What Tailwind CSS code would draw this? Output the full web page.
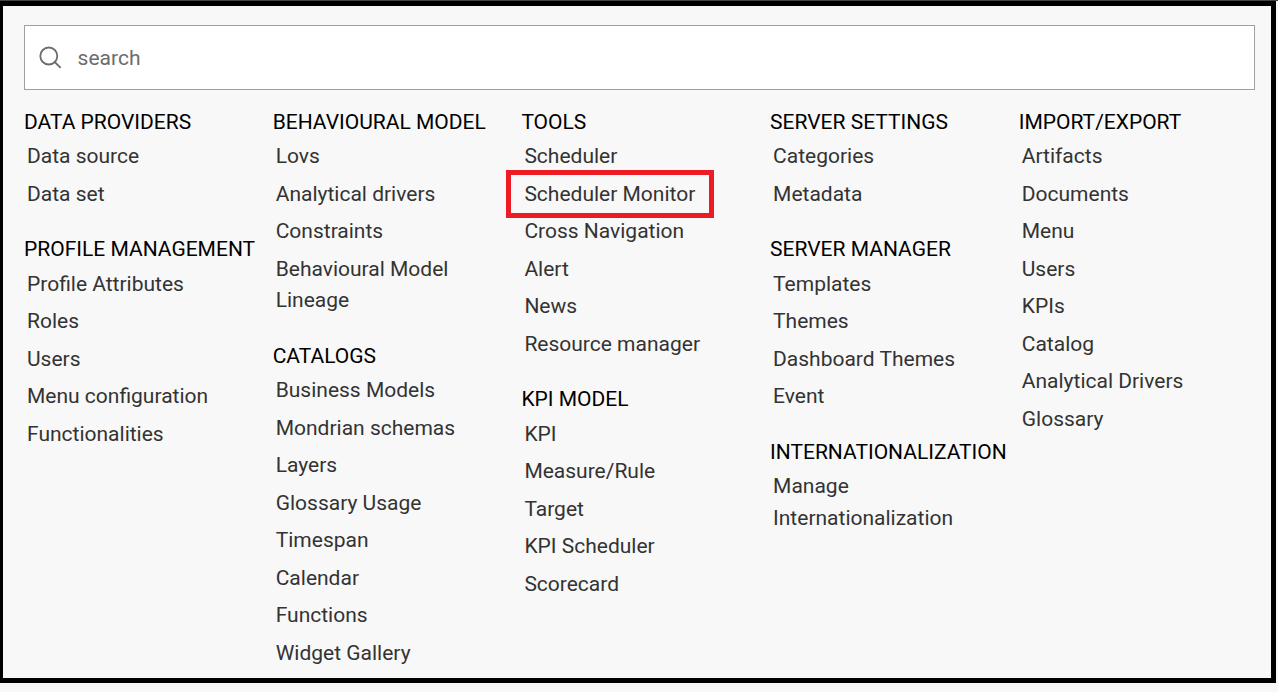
<!DOCTYPE html>
<html lang="en"><head><meta charset="utf-8"><title>Menu</title>
<script src="https://cdn.jsdelivr.net/npm/@tailwindcss/browser@4"></script></head>
<body class="bg-[#f8f8f8]">
<div class="w-[1278px] h-[692px] border-t border-[#444] pb-[9px] pr-[2px] overflow-hidden">
<main class="h-full border-y-[5px] border-l-[3px] border-r-[5px] border-black bg-[#f8f8f8] pt-[19px] pl-[21px] font-[Roboto,sans-serif] text-[21px] text-[#333]">
<label class="flex items-center w-[1231px] h-[65px] border border-[#a0a0a0] bg-white pl-[14px] gap-[15.6px] text-[#6c6c6c]">
<svg class="size-[23px]" viewBox="0 0 23 23" fill="none" stroke="#6c6c6c" stroke-width="1.8"><circle cx="9.8" cy="10" r="8.5"/><path d="M15.7 16l6 5.9"/></svg>
<span class="pt-[2px]">search</span></label>
<div id="cols" class="grid grid-cols-[repeat(5,248.7px)] mt-[14.5px]"></div>
</main></div>
<script>
const cols=[[['DATA PROVIDERS','Data source','Data set'],['PROFILE MANAGEMENT','Profile Attributes','Roles','Users','Menu configuration','Functionalities']],
[['BEHAVIOURAL MODEL','Lovs','Analytical drivers','Constraints','Behavioural Model Lineage'],['CATALOGS','Business Models','Mondrian schemas','Layers','Glossary Usage','Timespan','Calendar','Functions','Widget Gallery']],
[['TOOLS','Scheduler','Scheduler Monitor','Cross Navigation','Alert','News','Resource manager'],['KPI MODEL','KPI','Measure/Rule','Target','KPI Scheduler','Scorecard']],
[['SERVER SETTINGS','Categories','Metadata'],['SERVER MANAGER','Templates','Themes','Dashboard Themes','Event'],['INTERNATIONALIZATION','Manage Internationalization']],
[['IMPORT/EXPORT','Artifacts','Documents','Menu','Users','KPIs','Catalog','Analytical Drivers','Glossary']]];
document.getElementById('cols').innerHTML=cols.map(c=>'<div>'+c.map(([h,...r])=>`<section class="mb-[16px]"><h2 class="text-black whitespace-nowrap leading-[35px] mb-[1.5px]">${h}</h2><ul>${r.map(t=>`<li class="relative pl-[3px] pb-[6px] w-[200px] leading-[31.5px]">${t==='Scheduler Monitor'?'<div class="absolute left-[-15px] top-[-9px] w-[208px] h-[48px] border-[5px] border-[#ed1c24]"></div>':''}${t}</li>`).join('')}</ul></section>`).join('')+'</div>').join('');
</script>
</body></html>
